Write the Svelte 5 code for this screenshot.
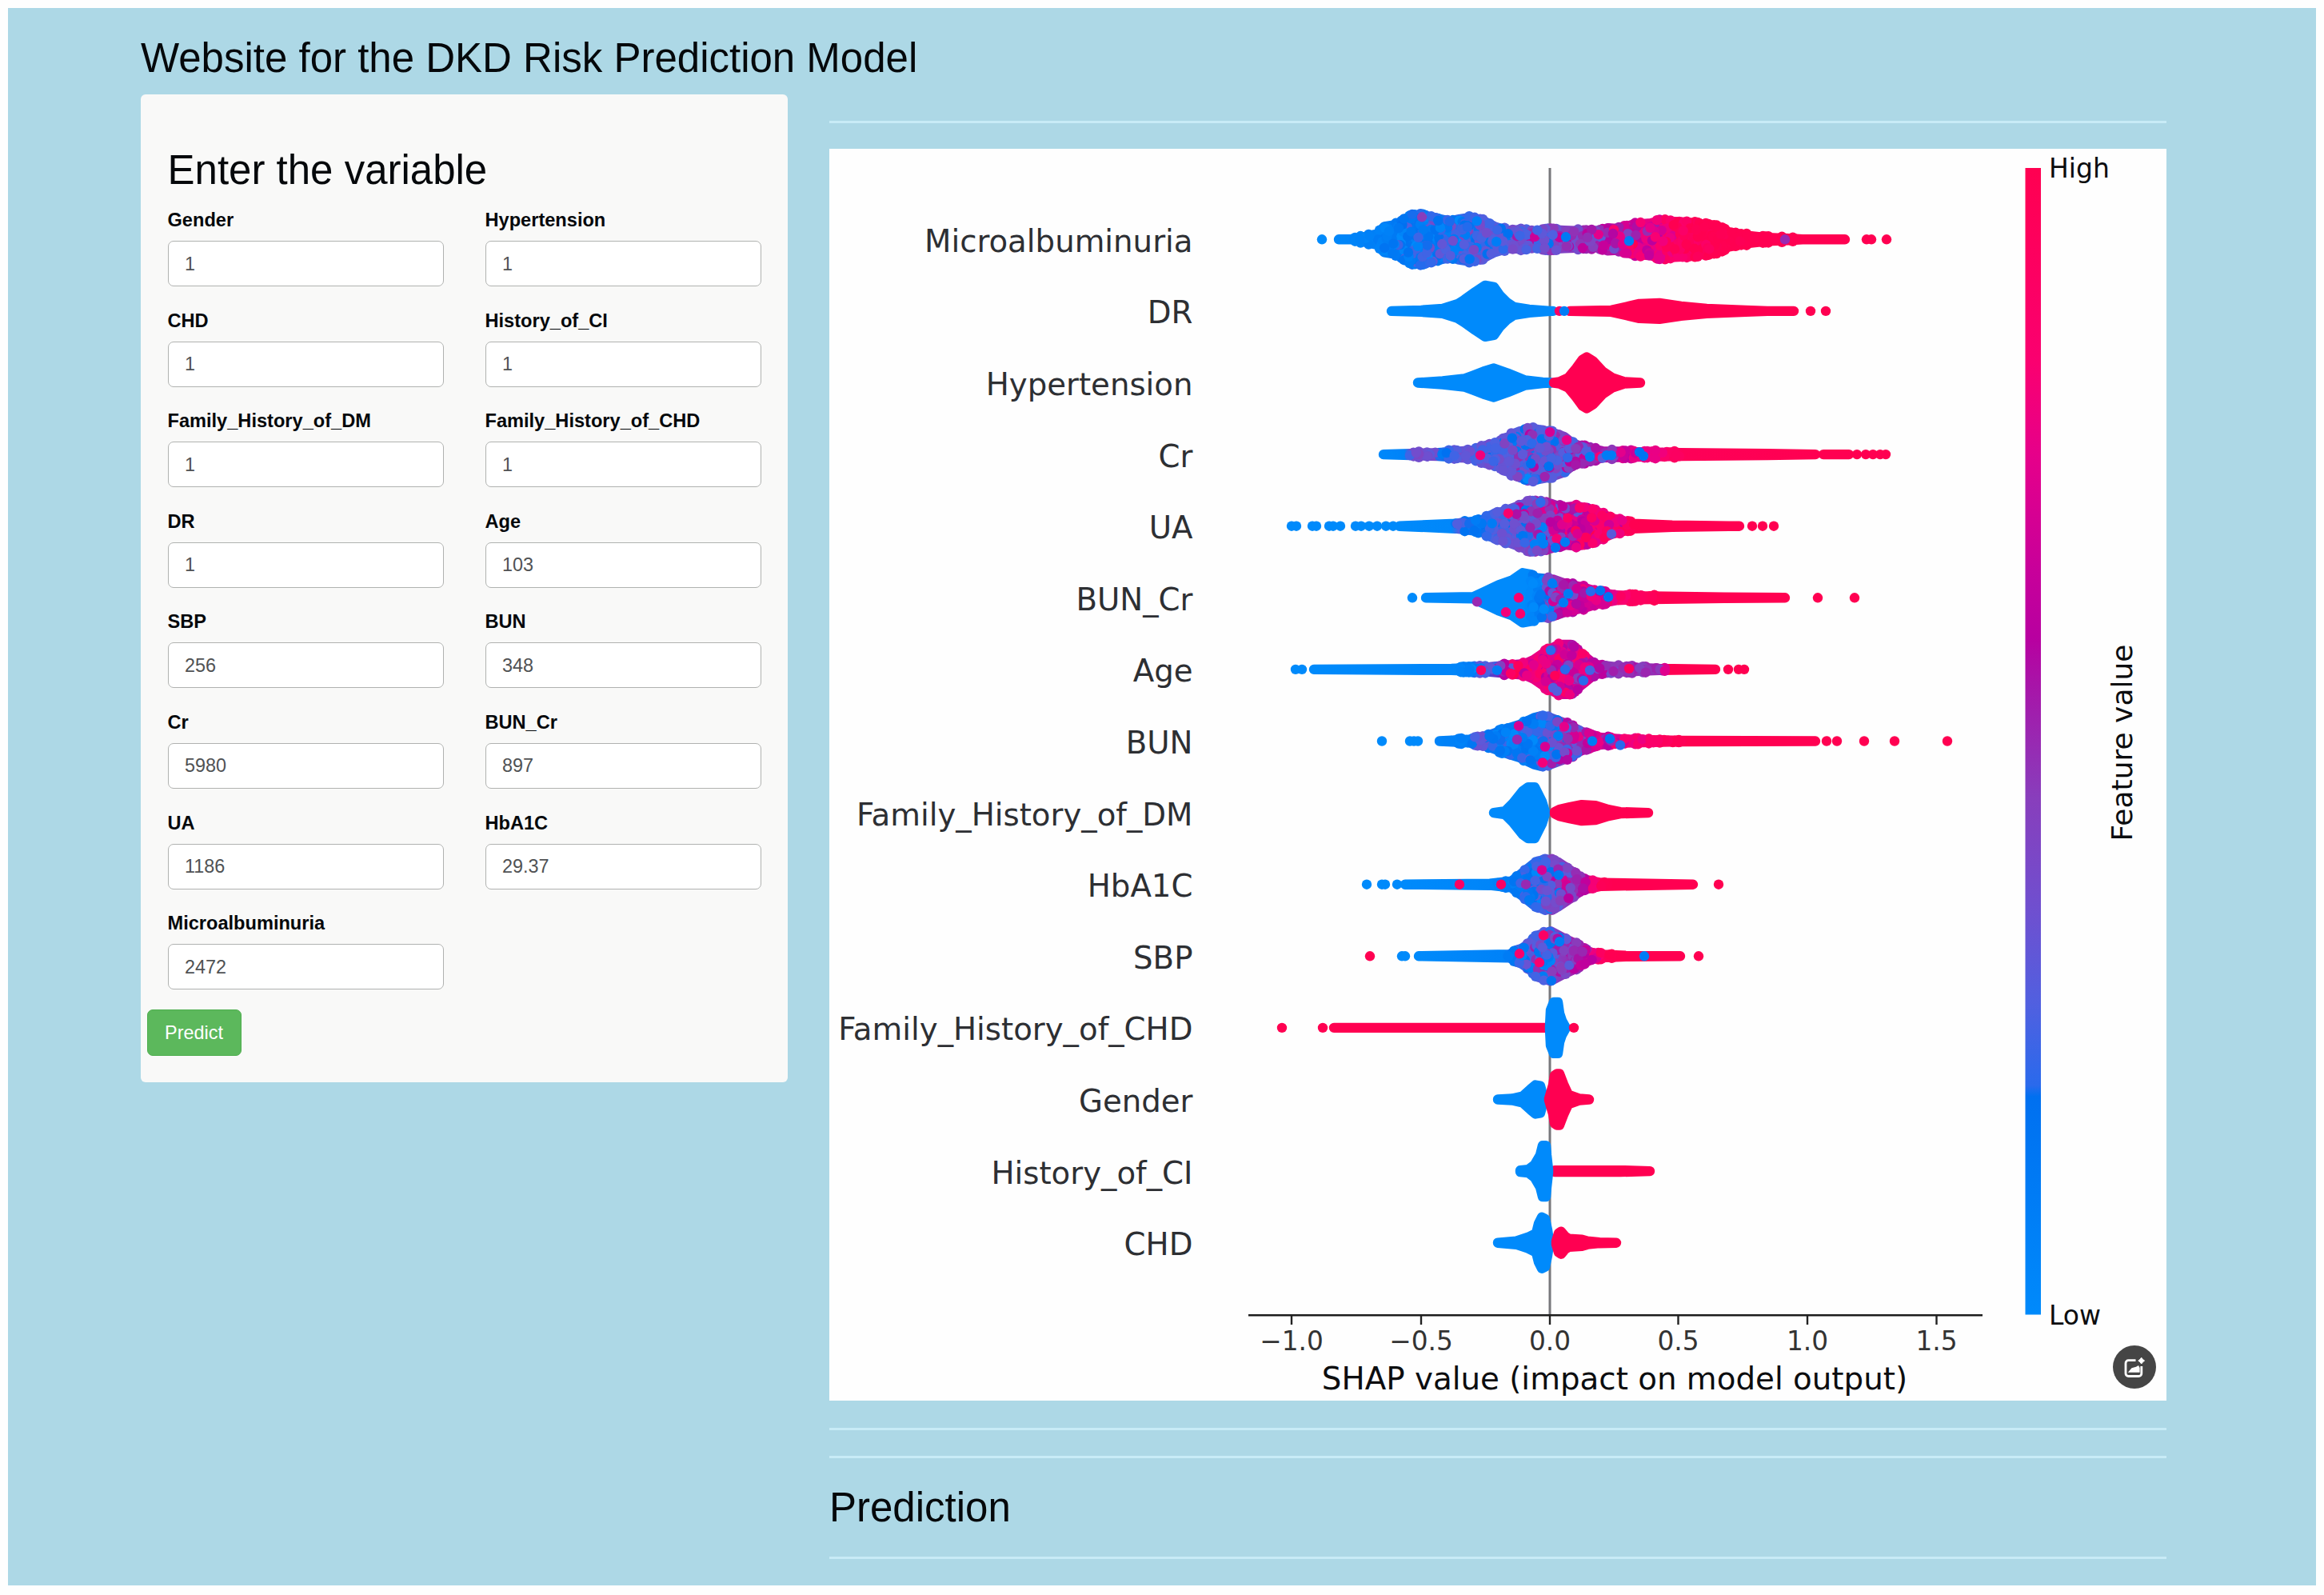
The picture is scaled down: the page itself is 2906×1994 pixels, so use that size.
<script lang="ts">
  type Pair = [number, number];
  /** x position, feature value 0..1, how widely the values scatter there */
  type Tone = [number, number, number];
  /** x position, feature value, vertical offset from the row's centre */
  type Dot = [number, number, number?];

  interface Cloud {
    outline: Pair[];
    tone: Tone[];
  }

  interface Row {
    name: string;
    clouds: Cloud[];
    dots: Dot[];
  }

  const LOW: Tone[] = [[0, 0, 0]];
  const HIGH: Tone[] = [[0, 1, 0]];

  const fields = [
    { label: 'Gender', value: '1' },
    { label: 'Hypertension', value: '1' },
    { label: 'CHD', value: '1' },
    { label: 'History_of_CI', value: '1' },
    { label: 'Family_History_of_DM', value: '1' },
    { label: 'Family_History_of_CHD', value: '1' },
    { label: 'DR', value: '1' },
    { label: 'Age', value: '103' },
    { label: 'SBP', value: '256' },
    { label: 'BUN', value: '348' },
    { label: 'Cr', value: '5980' },
    { label: 'BUN_Cr', value: '897' },
    { label: 'UA', value: '1186' },
    { label: 'HbA1C', value: '29.37' },
    { label: 'Microalbuminuria', value: '2472' },
  ];

  const ticks = [
    { x: 1615, label: '−1.0' },
    { x: 1777, label: '−0.5' },
    { x: 1938, label: '0.0' },
    { x: 2098.5, label: '0.5' },
    { x: 2260, label: '1.0' },
    { x: 2421.5, label: '1.5' },
  ];

  // outlines are [x, half height] along the row's centre line
  const rows: Row[] = [
    {
      name: 'Microalbuminuria',
      clouds: [
        {
          outline: [
            [1674, 6], [1693, 6], [1706, 9], [1723, 13], [1731, 22], [1750, 25], [1760, 33], [1769, 36], [1779, 36],
            [1798, 32], [1815, 28], [1823, 31], [1836, 33], [1855, 29], [1869, 22], [1885, 17], [1907, 18], [1920, 15],
            [1939, 18], [1956, 17], [1983, 16], [2002, 16], [2010, 20], [2026, 19], [2040, 24], [2064, 26], [2075, 29],
            [2113, 27], [2145, 22], [2162, 15], [2183, 11], [2210, 8], [2237, 7], [2254, 6], [2307, 6],
          ],
          tone: [
            [1674, 0.03, 0], [1700, 0.05, 0.02], [1725, 0.08, 0.05], [1770, 0.15, 0.15], [1830, 0.22, 0.18],
            [1880, 0.28, 0.16], [1935, 0.36, 0.25], [1990, 0.5, 0.22], [2030, 0.66, 0.25], [2075, 0.8, 0.2],
            [2110, 0.95, 0.12], [2150, 1, 0.03], [2235, 1, 0.02], [2250, 1, 0], [2307, 1, 0],
          ],
        },
      ],
      dots: [
        [1653, 0], [2232, 0.5], [2334, 1], [2340, 1], [2359, 1], [2037, 0.1, 2], [1958, 0.12, -3],
        [1778, 0.45, -28],
      ],
    },
    {
      name: 'DR',
      clouds: [
        {
          outline: [
            [1740, 6], [1777, 7], [1804, 9], [1823, 15], [1831, 20], [1845, 30], [1857, 38], [1868, 36], [1875, 26],
            [1884, 17], [1893, 11], [1912, 8], [1938, 6], [1942, 6],
          ],
          tone: LOW,
        },
        {
          outline: [
            [1963, 6], [2015, 7], [2037, 12], [2050, 15], [2075, 16], [2102, 12], [2134, 9], [2183, 7], [2210, 6],
            [2243, 6],
          ],
          tone: HIGH,
        },
      ],
      dots: [[1950, 0.9], [1956, 0.1], [2264, 1], [2283, 1]],
    },
    {
      name: 'Hypertension',
      clouds: [
        {
          outline: [
            [1773, 6], [1804, 8], [1831, 11], [1842, 15], [1855, 20], [1868, 24], [1885, 18], [1907, 9], [1929, 6.5],
            [1940, 6],
          ],
          tone: LOW,
        },
        {
          outline: [
            [1943, 6], [1950, 7], [1961, 12], [1971, 24], [1979, 35], [1984, 38], [1992, 33], [2004, 20], [2016, 12],
            [2031, 7], [2051, 6],
          ],
          tone: HIGH,
        },
      ],
      dots: [],
    },
    {
      name: 'Cr',
      clouds: [
        {
          outline: [
            [1730, 6], [1798, 8], [1842, 11], [1858, 17], [1874, 20], [1891, 31], [1901, 35], [1918, 38], [1939, 34],
            [1956, 28], [1966, 20], [1977, 16], [2004, 10], [2048, 9], [2102, 8], [2210, 7], [2270, 6],
          ],
          tone: [
            [1730, 0.02, 0], [1756, 0.05, 0], [1764, 0.38, 0.03], [1795, 0.38, 0.1], [1800, 0.18, 0.1],
            [1825, 0.34, 0.1], [1880, 0.27, 0.2], [1930, 0.3, 0.22], [1975, 0.48, 0.22], [2025, 0.6, 0.25],
            [2060, 0.76, 0.1], [2105, 0.96, 0], [2270, 1, 0],
          ],
        },
        { outline: [[2280, 6], [2312, 6]], tone: HIGH },
      ],
      dots: [
        [1851, 0.8, 1], [1938, 0.7, -28], [1959, 0.75, -18], [2322, 1], [2333, 1], [2342, 1], [2351, 1], [2358, 1],
        [1988, 0.1, 3], [2009, 0.1, 1], [2015, 0.1, 1], [2050, 0.15, -3], [2055, 0.15, 2],
      ],
    },
    {
      name: 'UA',
      clouds: [
        {
          outline: [
            [1750, 6], [1820, 9], [1853, 13], [1863, 19], [1885, 26], [1907, 34], [1912, 37], [1939, 34], [1953, 29],
            [1972, 31], [1994, 25], [2015, 16], [2042, 9], [2091, 7], [2162, 6], [2175, 6],
          ],
          tone: [
            [1750, 0, 0], [1815, 0.02, 0], [1824, 0.28, 0.12], [1840, 0.12, 0.1], [1880, 0.3, 0.12],
            [1920, 0.4, 0.3], [1960, 0.62, 0.35], [2000, 0.78, 0.2], [2030, 0.85, 0.2], [2048, 1, 0],
          ],
        },
      ],
      dots: [
        [1615, 0], [1621, 0], [1641, 0], [1646, 0], [1662, 0], [1667, 0], [1676, 0], [1695, 0], [1702, 0], [1712, 0],
        [1722, 0], [1733, 0], [1742, 0], [1886, 0.85, -16], [1927, 0.08, 14], [1930, 0.08, 22], [1957, 0.12, 20],
        [1945, 0.15, 27], [2015, 0.3, 10], [2191, 1], [2204, 1], [2218, 1],
      ],
    },
    {
      name: 'BUN_Cr',
      clouds: [
        {
          outline: [
            [1783, 6], [1842, 7], [1855, 13], [1874, 22], [1891, 28], [1904, 37], [1915, 35], [1920, 31], [1942, 29],
            [1956, 24], [1983, 18], [1999, 13], [2021, 9], [2048, 8], [2156, 6.5], [2232, 6],
          ],
          tone: [
            [1783, 0, 0], [1910, 0, 0], [1925, 0.12, 0.2], [1942, 0.45, 0.35], [1975, 0.68, 0.15],
            [2010, 0.72, 0.2], [2035, 0.9, 0.06], [2080, 1, 0],
          ],
        },
      ],
      dots: [
        [1766, 0], [1899, 0.85, 0], [1883, 0.8, 18], [1901, 0.85, 20], [1847, 0.5, 5], [1941, 0.1, -18],
        [1961, 0.1, -5], [1955, 0.1, 6], [1989, 0.2, -8], [2001, 0.15, -9], [2011, 0.15, -1], [2273, 1], [2319, 1],
      ],
    },
    {
      name: 'Age',
      clouds: [
        {
          outline: [
            [1643, 6], [1815, 7], [1863, 9], [1907, 13], [1918, 18], [1934, 29], [1949, 37], [1964, 37], [1978, 25],
            [1994, 12], [2021, 9], [2075, 7], [2145, 6],
          ],
          tone: [
            [1643, 0, 0], [1825, 0.04, 0], [1845, 0.15, 0.2], [1890, 0.6, 0.5], [1920, 0.78, 0.2],
            [1960, 0.68, 0.25], [1995, 0.68, 0.25], [2010, 0.46, 0.1], [2078, 0.5, 0.04], [2086, 1, 0],
          ],
        },
      ],
      dots: [
        [1620, 0], [1628, 0], [1852, 0.9, 1], [1872, 0.1, 1], [1889, 0.9, 5], [1939, 0.2, -24], [1957, 0.2, 0],
        [1942, 0.28, 23], [1947, 0.28, 27], [1980, 0.2, 14], [1988, 0.25, 1], [2037, 0.92, -1], [2161, 1], [2174, 1],
        [2181, 1],
      ],
    },
    {
      name: 'BUN',
      clouds: [
        {
          outline: [
            [1800, 6], [1842, 8], [1858, 12], [1880, 20], [1899, 26], [1918, 35], [1926, 37], [1939, 35], [1958, 28],
            [1977, 18], [1994, 11], [2031, 8], [2102, 6.5], [2270, 6],
          ],
          tone: [
            [1800, 0.05, 0], [1838, 0.1, 0.05], [1848, 0.32, 0.15], [1870, 0.1, 0.1], [1930, 0.17, 0.2],
            [1955, 0.45, 0.3], [1985, 0.6, 0.25], [2030, 0.75, 0.15], [2070, 0.92, 0.05], [2110, 1, 0],
          ],
        },
      ],
      dots: [
        [1728, 0], [1763, 0], [1768, 0], [1773, 0], [1899, 0.7, -19], [1932, 0.7, 7], [1929, 0.8, 27],
        [1897, 0.5, -2], [1956, 0.75, -18], [1991, 0.1, 0], [2013, 0.15, -3], [2026, 0.2, 5], [2284, 1], [2297, 1],
        [2331, 1], [2369, 1], [2435, 1],
      ],
    },
    {
      name: 'Family_History_of_DM',
      clouds: [
        {
          outline: [
            [1868, 6], [1882, 8], [1892, 18], [1904, 33], [1911, 38], [1919, 38], [1923, 30], [1928, 20], [1932, 7],
          ],
          tone: LOW,
        },
        {
          outline: [
            [1944, 7], [1950, 10], [1963, 13], [1978, 16], [1995, 15], [2011, 10], [2026, 7], [2061, 6],
          ],
          tone: HIGH,
        },
      ],
      dots: [],
    },
    {
      name: 'HbA1C',
      clouds: [
        {
          outline: [
            [1757, 6], [1863, 7], [1890, 10], [1902, 19], [1917, 31], [1932, 38], [1948, 34], [1963, 24], [1978, 13],
            [2002, 8], [2117, 6],
          ],
          tone: [
            [1757, 0, 0], [1868, 0.04, 0], [1890, 0.14, 0.1], [1925, 0.22, 0.2], [1950, 0.42, 0.25],
            [1978, 0.55, 0.1], [1998, 0.9, 0.1], [2010, 1, 0],
          ],
        },
      ],
      dots: [
        [1709, 0], [1728, 0], [1732, 0], [1747, 0], [1825, 0.9], [1877, 0.9], [1928, 0.7, -18], [1908, 0.5, 0],
        [2149, 1],
      ],
    },
    {
      name: 'SBP',
      clouds: [
        {
          outline: [
            [1774, 6], [1887, 8], [1899, 13], [1911, 21], [1923, 32], [1939, 37], [1954, 29], [1969, 22], [1981, 14],
            [1996, 8], [2033, 6.5], [2101, 6],
          ],
          tone: [
            [1774, 0, 0], [1880, 0.06, 0], [1900, 0.22, 0.1], [1930, 0.33, 0.3], [1960, 0.48, 0.25],
            [1985, 0.62, 0.12], [2005, 0.95, 0.05], [2020, 1, 0],
          ],
        },
      ],
      dots: [
        [1713, 1], [1753, 0], [1757, 0], [1930, 0.9, -26], [1900, 0.85, -3], [1925, 0.85, 8], [1950, 0.1, -18],
        [2056, 0.1], [2124, 1],
      ],
    },
    {
      name: 'Family_History_of_CHD',
      clouds: [
        { outline: [[1668, 6], [1935, 6]], tone: HIGH },
        {
          outline: [[1938, 8], [1939, 28], [1943, 38], [1948, 38], [1950, 24], [1953, 15], [1958, 6]],
          tone: LOW,
        },
      ],
      dots: [[1603, 1], [1654, 1], [1968, 1]],
    },
    {
      name: 'Gender',
      clouds: [
        {
          outline: [[1873, 6], [1891, 7], [1904, 10], [1914, 19], [1920, 24], [1926, 23], [1930, 8]],
          tone: LOW,
        },
        {
          outline: [
            [1937, 7], [1942, 24], [1944, 36], [1947, 38], [1950, 38], [1955, 25], [1961, 12], [1975, 7], [1987, 6],
          ],
          tone: HIGH,
        },
      ],
      dots: [],
    },
    {
      name: 'History_of_CI',
      clouds: [
        { outline: [[1944, 7], [2026, 7], [2063, 6]], tone: HIGH },
        {
          outline: [[1901, 7], [1911, 8], [1919, 14], [1926, 26], [1929, 38], [1933, 38], [1934, 26], [1936, 8]],
          tone: LOW,
        },
      ],
      dots: [],
    },
    {
      name: 'CHD',
      clouds: [
        {
          outline: [
            [1873, 6], [1896, 8], [1911, 13], [1921, 18], [1924, 30], [1928, 38], [1932, 36], [1935, 22], [1937, 8],
          ],
          tone: LOW,
        },
        {
          outline: [
            [1946, 8], [1949, 18], [1952, 20], [1957, 14], [1962, 11], [1978, 10], [1985, 8], [2000, 6.5], [2021, 6],
          ],
          tone: HIGH,
        },
      ],
      dots: [],
    },
  ];

  const RADIUS = 6.2;
  const rowY = (i: number) => 299.3 + 89.6 * i;

  const ramp: [number, number, number, number][] = [
    [0, 0, 138, 251],
    [0.19, 0, 112, 240],
    [0.2, 42, 106, 236],
    [0.27, 80, 96, 224],
    [0.35, 110, 80, 208],
    [0.45, 136, 62, 188],
    [0.55, 168, 20, 168],
    [0.59, 184, 0, 160],
    [0.65, 200, 0, 154],
    [0.75, 230, 0, 138],
    [0.83, 250, 0, 112],
    [1, 255, 0, 81],
  ];

  function colour(value: number) {
    const v = Math.min(1, Math.max(0, value));
    const k = Math.max(1, ramp.findIndex((stop) => stop[0] >= v));
    const a = ramp[k - 1];
    const b = ramp[k];
    const t = (v - a[0]) / (b[0] - a[0]);
    const mix = [1, 2, 3].map((c) => Math.round(a[c] + (b[c] - a[c]) * t));
    return `rgb(${mix.join(',')})`;
  }

  // linear lookup in a table whose first column is x
  function at(table: number[][], x: number, column: number) {
    if (x <= table[0][0]) return table[0][column];
    for (let k = 1; k < table.length; k++) {
      if (x <= table[k][0]) {
        const a = table[k - 1];
        const b = table[k];
        return a[column] + ((b[column] - a[column]) * (x - a[0])) / (b[0] - a[0]);
      }
    }
    return table[table.length - 1][column];
  }

  let seed = 7;
  function random() {
    seed = (seed * 16807) % 2147483647;
    return seed / 2147483647;
  }

  function hull(outline: Pair[], y: number) {
    const top = outline.map(([x, h]) => `${x},${y - h + 6}`);
    const bottom = [...outline].reverse().map(([x, h]) => `${x},${y + h - 6}`);
    return [...top, ...bottom].join(' ');
  }

  function swarm(cloud: Cloud, y: number) {
    const out: { x: number; y: number; fill: string }[] = [];
    const last = cloud.outline[cloud.outline.length - 1][0];
    for (let x = cloud.outline[0][0]; x < last; x += 3.4) {
      const spread = at(cloud.tone, x, 2);
      if (spread < 0.01) continue;
      const value = at(cloud.tone, x, 1);
      const reach = at(cloud.outline, x, 1) - 6;
      const count = Math.max(1, Math.round(reach / 4.5));
      for (let n = 0; n < count; n++) {
        const noise = (random() + random() + random() - 1.5) * 1.1;
        const offset = (random() * 2 - 1) * (reach + 0.8);
        out.push({ x: x + random() * 3, y: y + offset, fill: colour(value + noise * spread) });
      }
      // a few dots poke out of the edge
      if (random() < 0.35) {
        const poke = reach + 1 + random() * 1.6;
        const fill = colour(value + (random() - 0.5) * spread);
        out.push({ x, y: y - poke, fill }, { x, y: y + poke, fill });
      }
    }
    return out.sort(() => random() - 0.5);
  }

  const plot = rows.map((row, i) => {
    const y = rowY(i);
    return {
      ...row,
      y,
      clouds: row.clouds.map((cloud, k) => ({
        id: `tone-${i}-${k}`,
        hull: hull(cloud.outline, y),
        x1: cloud.outline[0][0] - 6,
        x2: cloud.outline[cloud.outline.length - 1][0] + 6,
        tone: cloud.tone,
        points: swarm(cloud, y),
      })),
    };
  });

  const share = (x: number, x1: number, x2: number) => Math.min(1, Math.max(0, (x - x1) / (x2 - x1)));
</script>

<div class="page">
  <h2>Website for the DKD Risk Prediction Model</h2>

  <div class="columns">
    <form class="well" onsubmit={(e) => e.preventDefault()}>
      <h2>Enter the variable</h2>
      <div class="fields">
        {#each fields as field (field.label)}
          <label>
            <span>{field.label}</span>
            <input type="text" bind:value={field.value} />
          </label>
        {/each}
      </div>
      <button type="submit">Predict</button>
    </form>

    <main>
      <hr />
      <div class="figure">
        <svg viewBox="1037 186 1672 1565" role="img" aria-label="SHAP summary plot">
          <defs>
            <linearGradient id="bar" x1="0" y1="1" x2="0" y2="0">
              {#each ramp as stop}
                <stop offset={stop[0]} stop-color={colour(stop[0])} />
              {/each}
            </linearGradient>
            {#each plot as row}
              {#each row.clouds as cloud (cloud.id)}
                <linearGradient id={cloud.id} gradientUnits="userSpaceOnUse" x1={cloud.x1} y1="0" x2={cloud.x2} y2="0">
                  {#each cloud.tone as stop}
                    <stop offset={share(stop[0], cloud.x1, cloud.x2)} stop-color={colour(stop[1])} />
                  {/each}
                </linearGradient>
              {/each}
            {/each}
          </defs>

          <line class="zero" x1="1938" y1="210" x2="1938" y2="1644" />

          {#each plot as row (row.name)}
            <text class="name" x="1491.5" y={row.y + 15.4}>{row.name}</text>
            {#each row.clouds as cloud (cloud.id)}
              <polygon class="cloud" points={cloud.hull} fill="url(#{cloud.id})" stroke="url(#{cloud.id})" />
              {#each cloud.points as point}
                <circle cx={point.x} cy={point.y} r={RADIUS} fill={point.fill} />
              {/each}
            {/each}
            {#each row.dots as [x, value, dy]}
              <circle cx={x} cy={row.y + (dy ?? 0)} r={RADIUS} fill={colour(value)} />
            {/each}
          {/each}

          <line class="axis" x1="1561" y1="1644.3" x2="2479" y2="1644.3" />
          {#each ticks as tick (tick.label)}
            <line class="tick" x1={tick.x} y1="1644" x2={tick.x} y2="1656" />
            <text class="number" x={tick.x} y="1688">{tick.label}</text>
          {/each}
          <text class="title" x="2019" y="1737">SHAP value (impact on model output)</text>

          <rect x="2532.5" y="210" width="19.5" height="1433.5" fill="url(#bar)" />
          <text class="end" x="2562" y="222">High</text>
          <text class="end" x="2562" y="1655.5">Low</text>
          <text class="side" transform="translate(2665.5 928.5) rotate(-90)">Feature value</text>
        </svg>

        <button type="button" class="lens" aria-label="Search image">
          <svg viewBox="0 0 54 54">
            <path
              d="M28.5 18.7H19.5a3.5 3.5 0 0 0-3.5 3.5V35a3.5 3.5 0 0 0 3.5 3.5H32.3a3.5 3.5 0 0 0 3.5-3.5V26"
              fill="none"
              stroke="#fff"
              stroke-width="2.8"
            />
            <path d="M18.8 33.8 23.5 28.3 29 26.8 32 25 33.6 28V33.8Z" fill="#fff" />
            <path
              d="M35.7 15.2 37.4 17.4 39.6 19.1 37.4 20.8 35.7 23 34 20.8 31.8 19.1 34 17.4Z"
              fill="#fff"
              stroke="#fff"
            />
          </svg>
        </button>
      </div>
      <hr />
      <hr />
      <h2>Prediction</h2>
      <hr />
    </main>
  </div>
</div>

<style>
  :global(body) {
    background: #fefefe;
  }

  .page {
    box-sizing: border-box;
    height: 1972px;
    margin: 10px 10px 12px;
    padding: 33.5px 0 0 166px;
    background: #add8e6;
    color: #05080b;
    font-family: 'Liberation Sans', Arial, sans-serif;
    font-size: 23.6px;
    overflow: hidden;
  }

  h2 {
    margin: 0;
    font-size: 51px;
    font-weight: 400;
    line-height: 57px;
  }

  .columns {
    display: flex;
    align-items: flex-start;
    gap: 52px;
    margin-top: 17px;
  }

  .well {
    box-sizing: border-box;
    width: 809px;
    height: 1235px;
    padding: 66.5px 34px 0 33.5px;
    border-radius: 6px;
    background: #f9f9f8;
  }

  .fields {
    display: grid;
    grid-template-columns: 345px 345px;
    gap: 28.6px 52px;
    margin-top: 20px;
  }

  label {
    display: block;
    font-weight: 700;
  }

  label span {
    display: block;
    height: 27px;
    margin-bottom: 13px;
    padding-top: 1px;
    box-sizing: border-box;
    line-height: 27px;
  }

  input {
    display: block;
    box-sizing: border-box;
    width: 100%;
    height: 57px;
    padding: 1px 20.5px 0;
    border: 1.5px solid #b0b2b0;
    border-radius: 7px;
    background: #fff;
    color: #505254;
    font: 23.4px 'Liberation Sans', Arial, sans-serif;
  }

  .well button {
    width: 118px;
    height: 58px;
    margin: 25px 0 0 -26px;
    padding: 0;
    border: 1.5px solid #4fae4f;
    border-radius: 7px;
    background: #5cb85c;
    color: #fff;
    font: 23.4px 'Liberation Sans', Arial, sans-serif;
  }

  main {
    width: 1672px;
    padding-top: 33px;
  }

  hr {
    height: 3px;
    margin: 0 0 32.5px;
    border: 0;
    background: #c8ebf6;
  }

  main h2 + hr {
    margin-top: 33px;
  }

  .figure {
    position: relative;
    height: 1565px;
    margin-bottom: 33.5px;
    background: #fefefe;
    font-family: 'DejaVu Sans', sans-serif;
  }

  .figure > svg {
    display: block;
    width: 1672px;
    height: 1565px;
  }

  .zero {
    stroke: #77777b;
    stroke-width: 3;
  }

  .axis {
    stroke: #1c1c1c;
    stroke-width: 2.6;
  }

  .tick {
    stroke: #222;
    stroke-width: 2.4;
  }

  .cloud {
    stroke-width: 12.4;
    stroke-linejoin: round;
  }

  .name {
    fill: #2d2f33;
    font-size: 38.7px;
    text-anchor: end;
  }

  .number {
    fill: #333;
    font-size: 32.8px;
    text-anchor: middle;
  }

  .title {
    fill: #0c0d0f;
    font-size: 38.8px;
    text-anchor: middle;
  }

  .side {
    fill: #0c0d0f;
    font-size: 36px;
    text-anchor: middle;
  }

  .end {
    fill: #0c0d0f;
    font-size: 33px;
  }

  /* floats over the corner of the figure */
  .lens {
    position: absolute;
    right: 13px;
    bottom: 15.5px;
    width: 54px;
    height: 54px;
    padding: 0;
    border: 0;
    border-radius: 50%;
    background: #454545;
  }

  .lens svg {
    display: block;
  }
</style>
